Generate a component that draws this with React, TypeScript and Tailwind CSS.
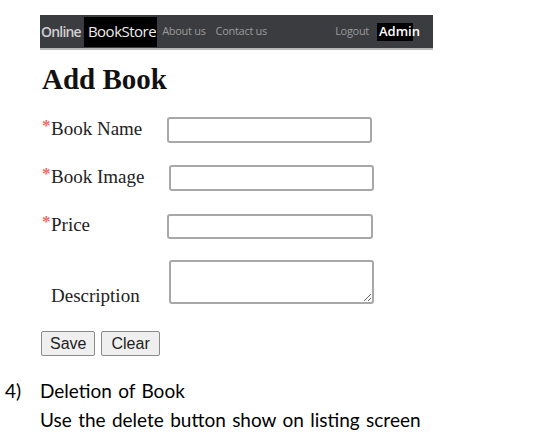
import React from "react";

const serif = { fontFamily: '"Liberation Serif", "Times New Roman", serif' };

function Req() {
  return (
    <span className="text-[#f26b6b] text-[17px] leading-none font-bold relative top-[-4px] inline-block w-[9px]">*</span>
  );
}

export default function App() {
  return (
    <div className="w-[544px] h-[442px] bg-white overflow-hidden relative">
      <div className="pl-[40px] pt-[15px]">
        <nav
          className="w-[393px] h-[35px] bg-[#3b3c40] border-b-2 border-[#b9b9b9] flex items-center text-[#d6d6d6]"
          style={{ fontFamily: '"Open Sans", "Noto Sans", sans-serif' }}
        >
          <span className="text-[14px] tracking-[-0.8px] ml-[1px] font-semibold text-[#cfcfcf]">Online</span>
          <span className="ml-[3px] bg-black h-[30px] flex items-center pl-[4px] pr-[1px] text-[15px] tracking-[-0.5px] text-[#ececec]">BookStore</span>
          <span className="ml-[5px] text-[11px] tracking-[-0.3px] text-[#9a9a9a]">About us</span>
          <span className="ml-[10px] text-[11px] tracking-[-0.3px] text-[#9a9a9a]">Contact us</span>
          <span className="ml-auto text-[11px] tracking-[-0.3px] text-[#9a9a9a]">Logout</span>
          <span className="ml-[8px] mr-[20px] bg-black h-[18px] flex items-center pl-[2px] w-[36px] overflow-visible whitespace-nowrap text-[13px] font-semibold text-white">Admin</span>
        </nav>

        <h1 className="mt-[15px] text-[29px] leading-[28px] font-bold text-[#111] ml-[2px]" style={serif}>
          Add Book
        </h1>

        <div className="mt-[24px] flex flex-col text-[19px] text-[#222]" style={serif}>
          <div className="flex items-center h-[26px]">
            <label className="w-[127px] pl-[2px] relative top-[-1px]"><Req />Book Name</label>
            <input className="w-[205px] h-[26px] border-2 border-[#a8a8a8] rounded-[3px] bg-white" />
          </div>
          <div className="flex items-center h-[26px] mt-[22px]">
            <label className="w-[129px] pl-[2px] relative top-[-1px]"><Req />Book Image</label>
            <input className="w-[205px] h-[26px] border-2 border-[#a8a8a8] rounded-[3px] bg-white" />
          </div>
          <div className="flex items-center h-[25px] mt-[23px]">
            <label className="w-[127px] pl-[2px] relative top-[-1px]"><Req />Price</label>
            <input className="w-[206px] h-[25px] border-2 border-[#a8a8a8] rounded-[3px] bg-white" />
          </div>
          <div className="flex items-end mt-[21px]">
            <label className="w-[129px] pl-[11px] relative top-[6px]">Description</label>
            <textarea className="w-[205px] h-[44px] border-2 border-[#a8a8a8] rounded-[3px] bg-white resize-y" />
          </div>
          <div className="flex gap-[6px] mt-[27px] ml-[1px]" style={{ fontFamily: '"Liberation Sans", Arial, sans-serif' }}>
            <button className="h-[25px] px-[8px] text-[16px] leading-none bg-[#efefef] border border-[#8a8a8a] rounded-[2px] text-[#222]">Save</button>
            <button className="h-[25px] px-[9px] text-[16px] leading-none bg-[#efefef] border border-[#8a8a8a] rounded-[2px] text-[#222]">Clear</button>
          </div>
        </div>
      </div>

      <div className="mt-[20px] text-[19px] text-black leading-[29px] [word-spacing:1.5px]" style={{ fontFamily: 'Lato, "Open Sans", sans-serif' }}>
        <div className="flex">
          <span className="w-[40px] pl-[5px]">4)</span>
          <span>Deletion of Book</span>
        </div>
        <div className="pl-[40px]">Use the delete button show on listing screen</div>
      </div>
    </div>
  );
}
